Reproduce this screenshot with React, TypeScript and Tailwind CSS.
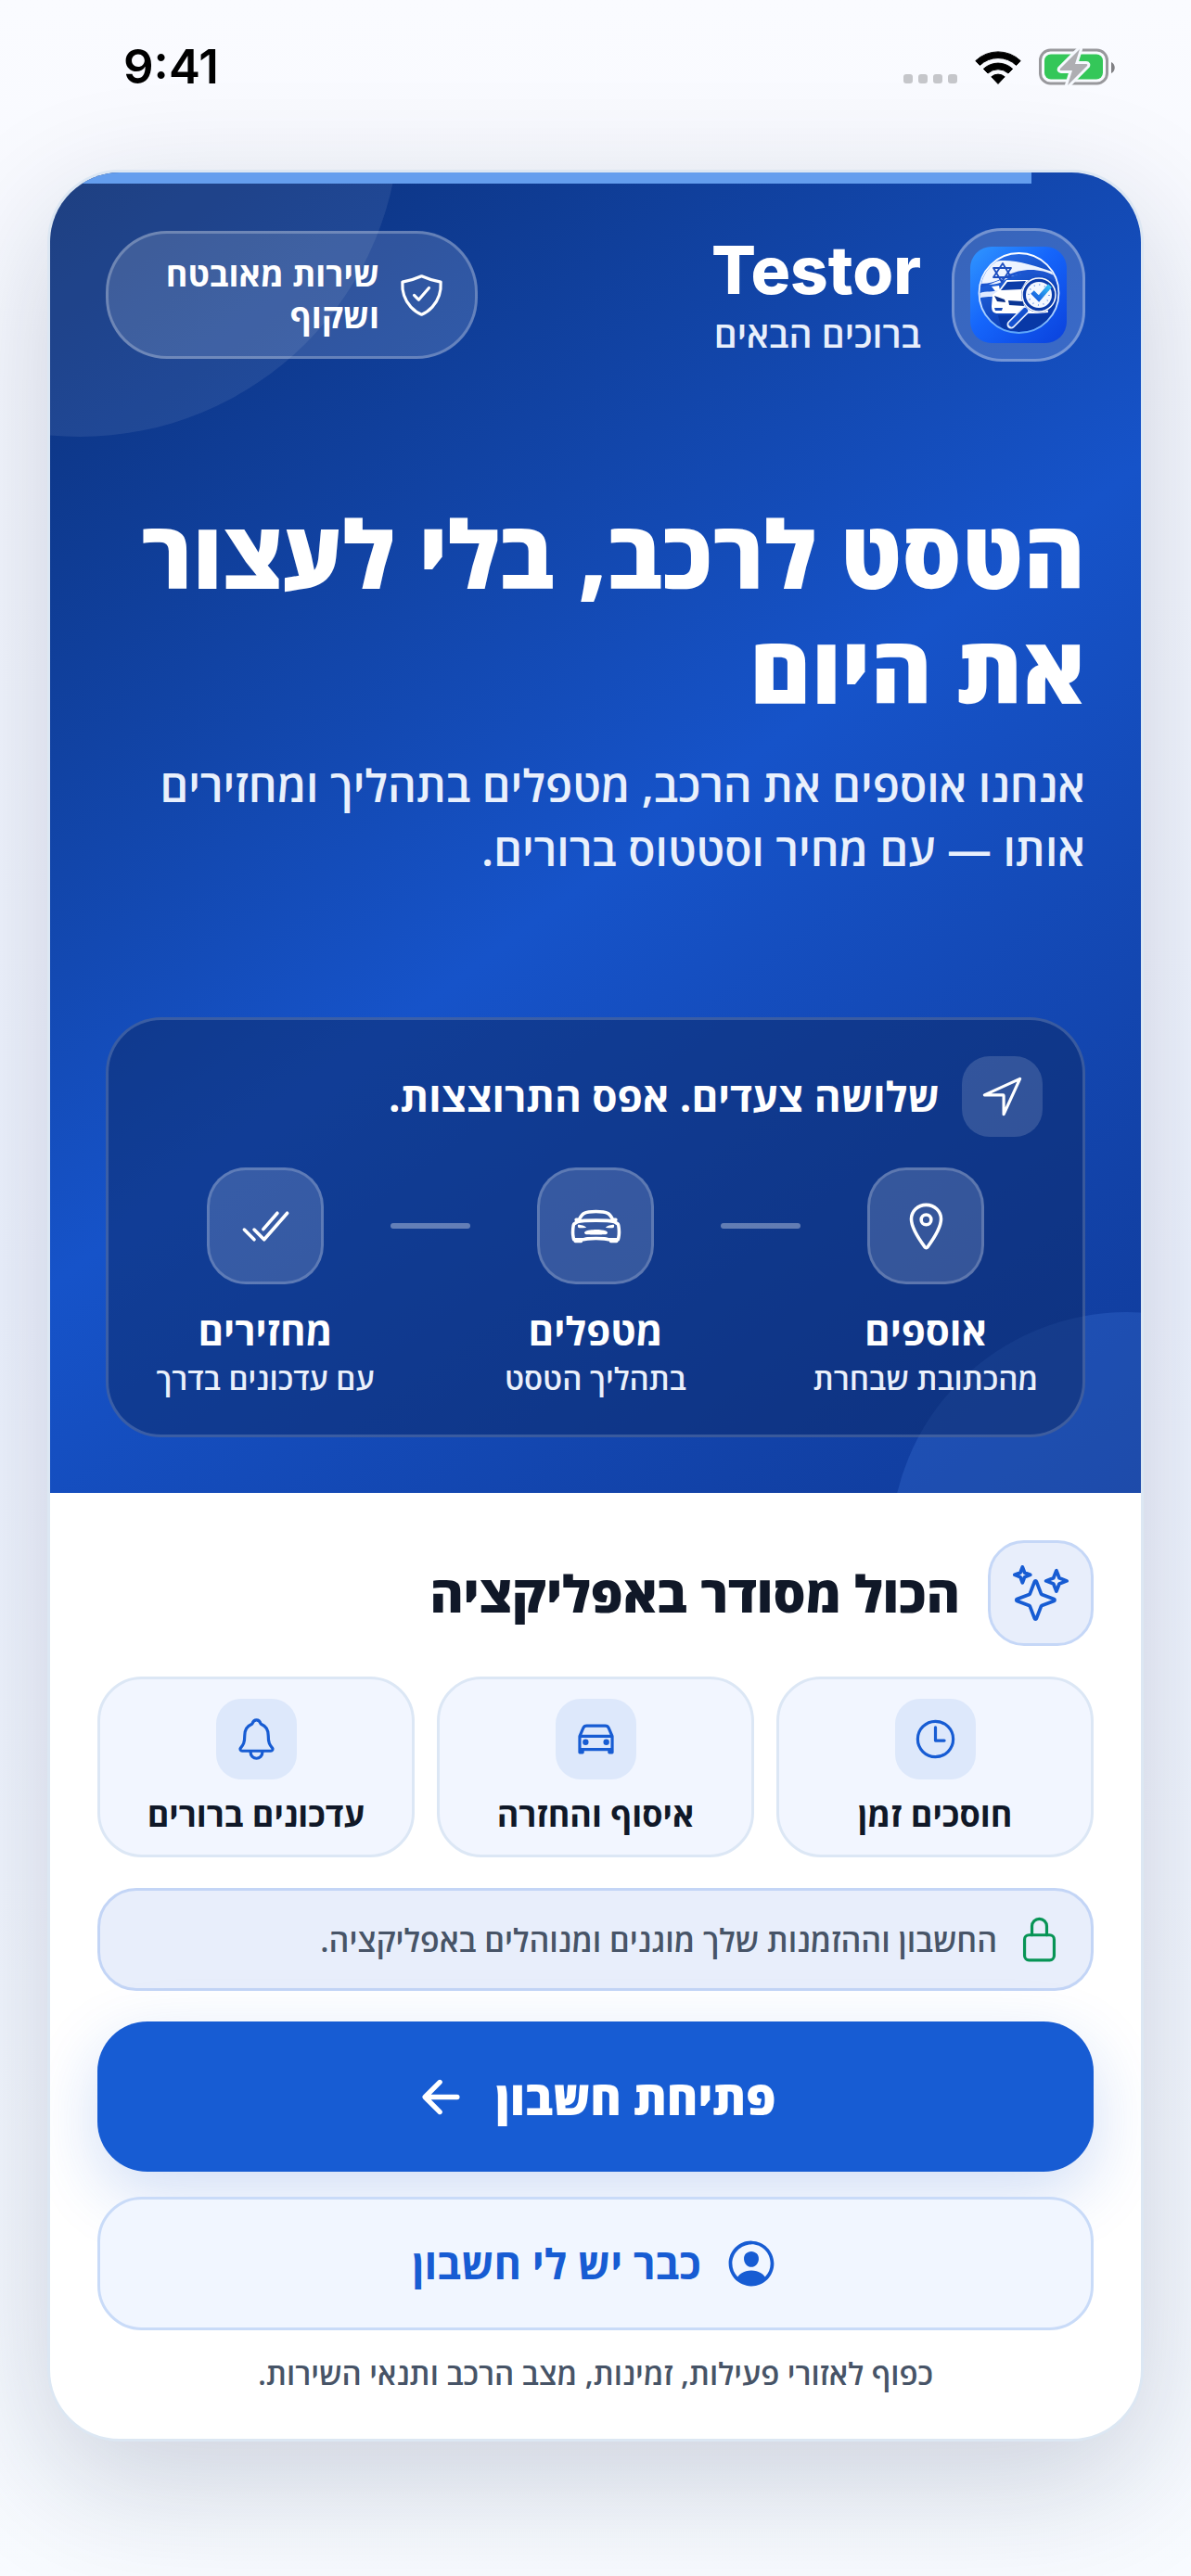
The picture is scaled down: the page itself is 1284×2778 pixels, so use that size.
import type { ReactNode } from "react";
import {
  IoArrowBack,
  IoCarOutline,
  IoCarSportOutline,
  IoCheckmarkDoneOutline,
  IoLocationOutline,
  IoLockClosedOutline,
  IoNavigateOutline,
  IoNotificationsOutline,
  IoPersonCircleOutline,
  IoShieldCheckmarkOutline,
  IoSparklesOutline,
  IoTimeOutline,
} from "react-icons/io5";

function StatusBar() {
  return (
    <header dir="ltr" className="flex h-[183px] items-start justify-between pt-[42px] pr-[82px] pl-[133px]">
      <time className="font-['Inter'] text-[51px] leading-[60px] font-semibold text-black">9:41</time>
      <div className="flex items-end gap-[19px] pt-[10px]">
        <div className="flex gap-[6px] pb-[2px]">
          {[0, 1, 2, 3].map((dot) => (
            <span key={dot} className="size-[10px] rounded-[3px] bg-[#c5c6ca]" />
          ))}
        </div>
        <svg viewBox="0 0 50 38" className="h-[38px] w-[50px]" role="img" aria-label="Wi-Fi">
          <path d="M0.8 11.6 A35 35 0 0 1 49.2 11.6 L44.6 16.4 A28.4 28.4 0 0 0 5.4 16.4 Z" fill="#000" stroke="#000" strokeLinejoin="round" />
          <path d="M9.3 20.3 A23 23 0 0 1 40.7 20.3 L36 25 A16.4 16.4 0 0 0 14 25 Z" fill="#000" stroke="#000" strokeLinejoin="round" />
          <path d="M17.8 28.8 A11 11 0 0 1 32.2 28.8 L25 36.4 Z" fill="#000" stroke="#000" strokeLinejoin="round" />
        </svg>
        <svg viewBox="0 0 82 40" className="h-[40px] w-[82px]" role="img" aria-label="Battery charging">
          <rect x="1.5" y="2" width="72" height="36" rx="11" fill="none" stroke="#98989c" strokeWidth="3" />
          <rect x="6" y="6.5" width="63" height="27" rx="7" fill="#34c759" />
          <path d="M78 15 C83 17 83 25 78 27 Z" fill="#808084" />
          <path d="M44 1 L23 22 Q22 24 24 24 L36 24 L31 40 L52 19 Q53 17 51 17 L39 17 Z" fill="#aeaeb2" stroke="#f6f9fe" strokeWidth="6" strokeLinejoin="round" />
          <path d="M44 1 L23 22 Q22 24 24 24 L36 24 L31 40 L52 19 Q53 17 51 17 L39 17 Z" fill="#aeaeb2" />
        </svg>
      </div>
    </header>
  );
}

function TestorLogo() {
  return (
    <svg viewBox="0 0 104 104" className="size-[104px]" role="img" aria-label="Testor">
      <defs>
        <linearGradient id="tile" x1="0" y1="0" x2="1" y2="1">
          <stop offset="0" stopColor="#3096ff" />
          <stop offset="0.45" stopColor="#1565fb" />
          <stop offset="1" stopColor="#0a41dc" />
        </linearGradient>
        <linearGradient id="disc" x1="0" y1="0" x2="0.6" y2="1">
          <stop offset="0" stopColor="#2a72ee" />
          <stop offset="1" stopColor="#0634a8" />
        </linearGradient>
        <linearGradient id="tick" x1="0" y1="1" x2="1" y2="0">
          <stop offset="0" stopColor="#1458dd" />
          <stop offset="1" stopColor="#35c3f8" />
        </linearGradient>
        <linearGradient id="ring" x1="0" y1="0" x2="0" y2="1">
          <stop offset="0" stopColor="#ffffff" />
          <stop offset="0.6" stopColor="#dbe8ff" />
          <stop offset="1" stopColor="#5aa4f8" />
        </linearGradient>
        <clipPath id="discClip">
          <circle cx="52.5" cy="50" r="42" />
        </clipPath>
      </defs>
      <rect width="104" height="104" rx="23" fill="url(#tile)" />
      <circle cx="52.5" cy="50" r="42" fill="url(#disc)" />
      <g clipPath="url(#discClip)">
        <path d="M8 24 C30 8 55 15 97 30 L97 38 C70 22 50 28 34 38 C26 42 18 40 8 42 Z" fill="#eef4ff" />
        <path d="M12 44 C28 38 44 30 60 29 C74 28 86 34 96 40 L92 32 C74 22 54 24 40 31 C30 37 22 40 10 40 Z" fill="#1c55cf" />
        <path d="M8 51 C16 47 24 50 32 46 L30 53 C22 55 16 53 9 56 Z" fill="#dfeaff" />
        <path d="M30 74 L84 74 L78 90 L34 90 Z" fill="#0838a6" />
      </g>
      <g fill="none" stroke="#1d4ec0" strokeWidth="1.8" strokeLinejoin="round">
        <path d="M35 18 L44 33 L25 33 Z" />
        <path d="M34 38 L25 23 L44 23 Z" />
      </g>
      <path d="M39 36 L66 36 C73 36 78 40 82 50 L84 71 L72 72 L30 72 C25 72 23 70 23 64 L24 52 L31 47 Z" fill="#fff" />
      <path d="M23 43 L31 42 L32 47 L27 48 Z" fill="#fff" />
      <path d="M40 38 L60 37 L55 46 L33 47 Z" fill="#0b3ca8" />
      <path d="M26 53 L37 57 L38 60 L29 59 Z" fill="#0a2f86" />
      <path d="M41 58 L57 59 L58 64 L42 63 Z" fill="#0a3594" />
      <path d="M26 66 L35 66 L34 69 L27 69 Z" fill="#1a4cb8" />
      <path d="M60 68 L44 84" stroke="#e9f1ff" strokeWidth="9" strokeLinecap="round" />
      <path d="M59 69 L44.500 83.500" stroke="#1450cf" strokeWidth="6" strokeLinecap="round" />
      <circle cx="74" cy="52" r="19" fill="#0b3ba9" />
      <circle cx="74" cy="52" r="18" fill="none" stroke="#fff" strokeWidth="1.500" />
      <circle cx="74" cy="52" r="14" fill="#f4f8ff" />
      <circle cx="74" cy="52" r="11" fill="none" stroke="#5b8be6" strokeWidth="1.500" strokeDasharray="1 4.760" />
      <path d="M67 49 L74 56 L86 42" fill="none" stroke="url(#tick)" strokeWidth="5" />
      <circle cx="52.5" cy="50" r="43" fill="none" stroke="url(#ring)" strokeWidth="1.800" />
    </svg>
  );
}

function Step({ icon, title, note }: { icon: ReactNode; title: string; note: string }) {
  return (
    <li className="flex flex-1 flex-col items-center whitespace-nowrap">
      <span className="flex size-[126px] items-center justify-center rounded-[42px] border-3 border-white/20 bg-white/16 text-[57px]">
        {icon}
      </span>
      <strong className="mt-[24px] text-[42px] leading-[51px] font-bold">{title}</strong>
      <span className="mt-[6px] text-[33px] leading-[42px] font-semibold text-[#eaf0fb]">{note}</span>
    </li>
  );
}

function Connector() {
  return <li aria-hidden="true" className="mx-[5px] mt-[60px] h-[6px] w-[86px] rounded-full bg-white/35" />;
}

function Feature({ icon, label }: { icon: ReactNode; label: string }) {
  return (
    <li className="flex flex-1 flex-col items-center rounded-[48px] border-3 border-[#dce7f5] bg-[#f2f6ff] pt-[21px] pb-[21px]">
      <span className="flex size-[87px] items-center justify-center rounded-[27px] bg-[#dde8fb] text-[51px] text-[#175cd3]">
        {icon}
      </span>
      <span className="mt-[15px] text-[36px] leading-[45px] font-bold whitespace-nowrap text-[#101828]">{label}</span>
    </li>
  );
}

export default function App() {
  return (
    <div
      dir="rtl"
      lang="he"
      className="min-h-screen overflow-hidden bg-gradient-to-b from-[#fafbff] via-[#eff4ff] to-[#f8fbff] pb-[144px] font-['Open_Sans','Noto_Sans',sans-serif]"
    >
      <StatusBar />
      <main className="mx-[51px] overflow-hidden rounded-[78px] border-3 border-[#dce7f3] bg-white shadow-[0_42px_140px_rgba(16,30,70,0.19)]">
        <section className="relative overflow-hidden bg-[linear-gradient(143deg,#0b2f76_0%,#1653c9_52%,#103a98_100%)] px-[60px] pt-[60px] pb-[60px] text-white">
          <div className="absolute top-[-405px] left-[-313px] size-[690px] rounded-full bg-white/8" />
          <div className="absolute right-[-240px] bottom-[-315px] size-[510px] rounded-full bg-[#5c9cff]/18" />
          <div className="absolute top-0 left-0 h-[12px] w-9/10 bg-[#649eee]" />

          <div className="relative flex items-center justify-between">
            <div className="flex items-center gap-[33px]">
              <div className="flex size-[144px] items-center justify-center rounded-[54px] border-3 border-white/30 bg-white/16">
                <TestorLogo />
              </div>
              <div>
                <p className="font-['Inter'] text-[71px] leading-[84px] font-extrabold">Testor</p>
                <p className="text-[39px] leading-[54px] font-semibold text-[#e8effb]">ברוכים הבאים</p>
              </div>
            </div>
            <div className="flex w-[401px] items-center gap-[20px] rounded-[66px] border-3 border-white/25 bg-white/14 py-[21px] pr-[32px] pl-[30px]">
              <IoShieldCheckmarkOutline className="size-[51px] shrink-0" />
              <p className="w-[240px] text-[36px] leading-[45px] font-bold">שירות מאובטח ושקוף</p>
            </div>
          </div>

          <h1 className="relative mt-[144px] text-[101px] leading-[124px] font-extrabold">
            הטסט לרכב, בלי לעצור את היום
          </h1>
          <p className="relative mt-[30px] text-[48px] leading-[69px] font-semibold text-[#e9f0fc]">
            אנחנו אוספים את הרכב, מטפלים בתהליך ומחזירים אותו — עם מחיר וסטטוס ברורים.
          </p>

          <div className="relative mt-[147px] rounded-[60px] border-3 border-white/18 bg-[#0b2863]/50 px-[39px] pt-[39px] pb-[39px]">
            <div className="flex items-center gap-[24px] px-[4px]">
              <span className="flex size-[87px] items-center justify-center rounded-[30px] bg-white/15 text-[51px]">
                <IoNavigateOutline />
              </span>
              <h2 className="text-[44px] leading-[57px] font-bold">שלושה צעדים. אפס התרוצצות.</h2>
            </div>
            <ol className="mt-[33px] flex items-start">
              <Step icon={<IoLocationOutline />} title="אוספים" note="מהכתובת שבחרת" />
              <Connector />
              <Step icon={<IoCarSportOutline />} title="מטפלים" note="בתהליך הטסט" />
              <Connector />
              <Step icon={<IoCheckmarkDoneOutline />} title="מחזירים" note="עם עדכונים בדרך" />
            </ol>
          </div>
        </section>

        <section className="px-[51px] pt-[51px] pb-[48px]">
          <div className="flex items-center gap-[30px]">
            <span className="flex size-[114px] items-center justify-center rounded-[39px] border-3 border-[#c5d7f7] bg-[#e8eefb] text-[60px] text-[#175cd3]">
              <IoSparklesOutline />
            </span>
            <h2 className="text-[55px] leading-[72px] font-extrabold text-[#101828]">הכול מסודר באפליקציה</h2>
          </div>

          <ul className="mt-[33px] flex gap-[24px]">
            <Feature icon={<IoTimeOutline />} label="חוסכים זמן" />
            <Feature icon={<IoCarOutline />} label="איסוף והחזרה" />
            <Feature icon={<IoNotificationsOutline />} label="עדכונים ברורים" />
          </ul>

          <p className="mt-[33px] flex items-center gap-[20px] rounded-[42px] border-3 border-[#c3d5f6] bg-[#e8eefb] px-[30px] py-[27px] text-[34px] leading-[48px] font-semibold text-[#475467]">
            <IoLockClosedOutline className="size-[51px] shrink-0 text-[#079455]" />
            החשבון וההזמנות שלך מוגנים ומנוהלים באפליקציה.
          </p>

          <button
            type="button"
            className="mt-[33px] flex h-[162px] w-full items-center justify-center gap-[30px] rounded-[54px] bg-[#175cd3] text-[51px] font-extrabold text-white shadow-[0_24px_72px_rgba(23,92,211,0.2)]"
          >
            פתיחת חשבון
            <IoArrowBack className="size-[57px]" />
          </button>
          <button
            type="button"
            className="relative mt-[27px] flex h-[144px] w-full items-center justify-center gap-[24px] rounded-[48px] border-3 border-[#c9dbf8] bg-[#f1f6ff] text-[45px] font-bold text-[#175cd3]"
          >
            <IoPersonCircleOutline className="size-[60px]" />
            כבר יש לי חשבון
          </button>
          <p className="mt-[24px] text-center text-[33px] leading-[45px] font-semibold text-[#475467]">
            כפוף לאזורי פעילות, זמינות, מצב הרכב ותנאי השירות.
          </p>
        </section>
      </main>
    </div>
  );
}
